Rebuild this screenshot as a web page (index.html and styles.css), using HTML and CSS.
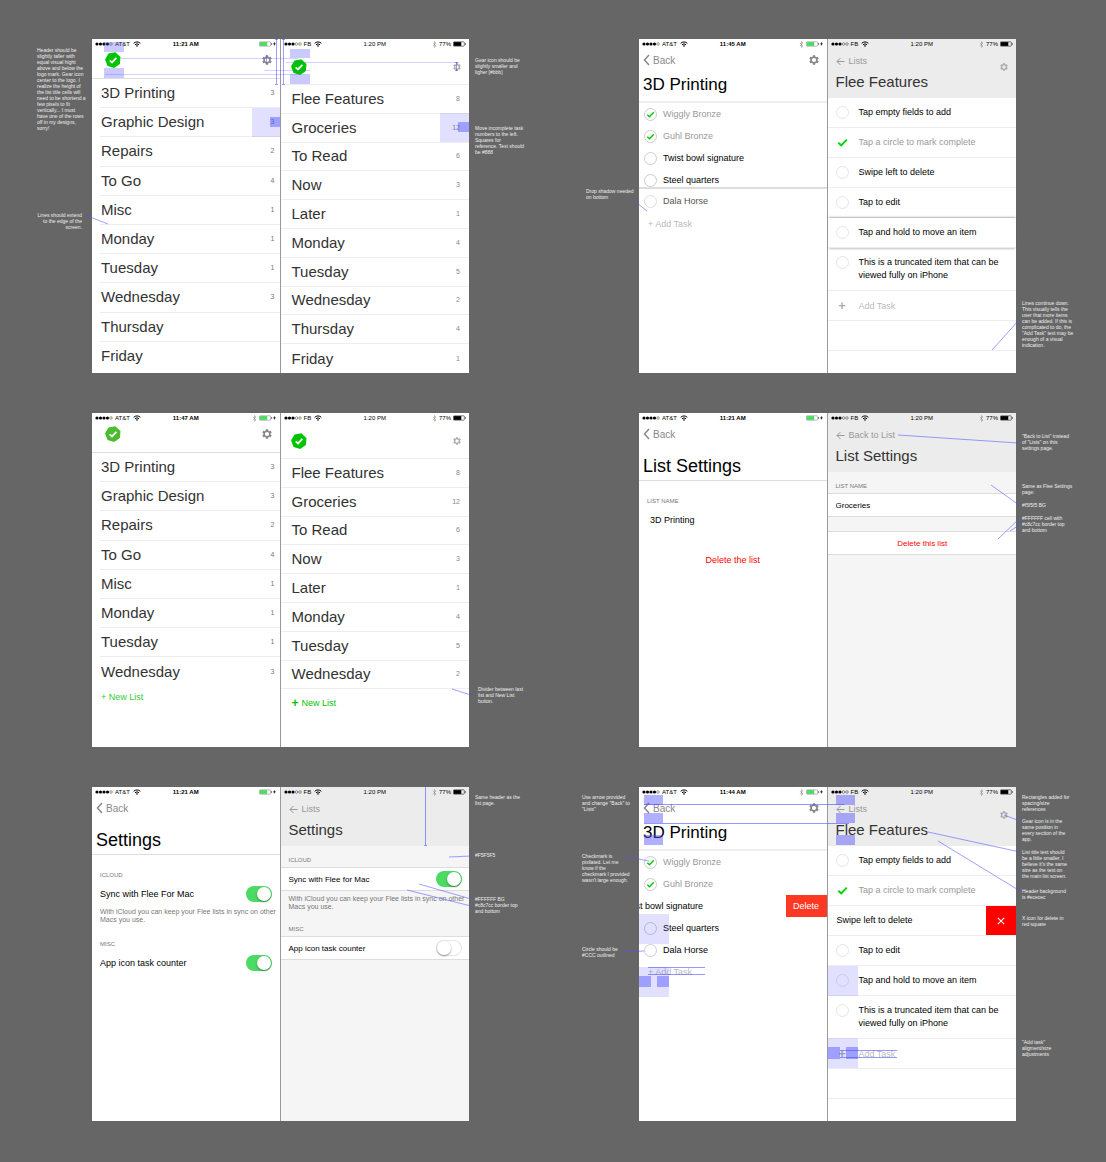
FILE: index.html
```html
<!DOCTYPE html>
<html lang="en">
<head>
    <meta charset="UTF-8">
    <meta name="viewport" content="width=device-width, initial-scale=1">
    <title>Flee design review</title>
    <link rel="stylesheet" href="styles.css">
</head>
<body>

<svg class="symbols" aria-hidden="true">
    <symbol id="logo" viewBox="0 0 16 16">
        <polygon fill="currentColor" points="10.3,.3 15.5,5 14.9,12 9.2,15.9 2.6,13.9 0,7.4 3.5,1.4"/>
        <path d="M4.7 8.3L7 10.4l4.4-4.5" fill="none" stroke="#fff" stroke-width="1.8"/>
    </symbol>
    <symbol id="gear" viewBox="2 2 20 20">
        <path fill="currentColor" fill-rule="evenodd" d="M19.14 12.94c.04-.3.06-.61.06-.94 0-.32-.02-.64-.07-.94l2.03-1.58c.18-.14.23-.41.12-.61l-1.92-3.32c-.12-.22-.37-.29-.59-.22l-2.39.96c-.5-.38-1.03-.7-1.62-.94l-.36-2.54c-.04-.24-.24-.41-.48-.41h-3.84c-.24 0-.43.17-.47.41l-.36 2.54c-.59.24-1.13.57-1.62.94l-2.39-.96c-.22-.08-.47 0-.59.22L2.74 8.87c-.12.21-.08.47.12.61l2.03 1.58c-.05.3-.09.63-.09.94s.02.64.07.94l-2.03 1.58c-.18.14-.23.41-.12.61l1.92 3.32c.12.22.37.29.59.22l2.39-.96c.5.38 1.03.7 1.62.94l.36 2.54c.05.24.24.41.48.41h3.84c.24 0 .44-.17.47-.41l.36-2.54c.59-.24 1.13-.56 1.62-.94l2.39.96c.22.08.47 0 .59-.22l1.92-3.32c.12-.22.07-.47-.12-.61l-2.01-1.58zM12 16.2a4.2 4.2 0 1 1 0-8.4 4.2 4.2 0 0 1 0 8.4z"/>
    </symbol>
    <symbol id="chevron" viewBox="0 0 7 12">
        <path d="M6 1L1.5 6 6 11" fill="none" stroke="currentColor" stroke-width="1.5"/>
    </symbol>
    <symbol id="arrow" viewBox="0 0 9 9">
        <path d="M8.5 4.5H1M4.5 1L1 4.5 4.5 8" fill="none" stroke="currentColor"/>
    </symbol>
    <symbol id="dots4" viewBox="0 0 18 4">
        <circle cx="2" cy="2" r="1.6"/><circle cx="5.5" cy="2" r="1.6"/><circle cx="9" cy="2" r="1.6"/><circle cx="12.5" cy="2" r="1.6"/>
        <circle cx="16" cy="2" r="1.3" fill="none" stroke="#000" stroke-width=".4"/>
    </symbol>
    <symbol id="dots3" viewBox="0 0 18 4">
        <circle cx="2" cy="2" r="1.6"/><circle cx="5.5" cy="2" r="1.6"/><circle cx="9" cy="2" r="1.6"/>
        <circle cx="12.5" cy="2" r="1.3" fill="none" stroke="#000" stroke-width=".4"/>
        <circle cx="16" cy="2" r="1.3" fill="none" stroke="#000" stroke-width=".4"/>
    </symbol>
    <symbol id="wifi" viewBox="0 0 12 9">
        <path d="M1 3.5a7 7 0 0 1 10 0M3 5.7a4.2 4.2 0 0 1 6 0" fill="none" stroke="#000" stroke-width="1.5"/>
        <path d="M4.4 7.2a2.2 2.2 0 0 1 3.2 0L6 8.9z"/>
    </symbol>
    <symbol id="bluetooth" viewBox="0 0 5 8">
        <path d="M.6 2.2l3.6 3.5L2.5 7.4V.6l1.7 1.7L.6 5.8" fill="none" stroke="#888" stroke-width=".6"/>
    </symbol>
    <symbol id="charging" viewBox="0 0 18 6">
        <rect x=".3" y=".8" width="11.4" height="4.4" rx=".8" fill="none" stroke="#777" stroke-width=".5"/>
        <rect x=".7" y="1.1" width="7.5" height="3.8" fill="#4cd964"/>
        <path d="M12.3 2.2v1.6l.8-.4v-.8z"/>
        <path d="M16 .8L14 3.3h1.3L14.9 5l2-2.5h-1.3z"/>
    </symbol>
    <symbol id="battery" viewBox="0 0 13 6">
        <rect x=".3" y=".8" width="11" height="4.4" rx=".8" fill="none" stroke="#000" stroke-width=".5"/>
        <rect x=".7" y="1.1" width="7.6" height="3.8"/>
        <path d="M11.9 2.2v1.6l.8-.4v-.8z"/>
    </symbol>
</svg>

<main>
    <!-- main list -->
    <section class="board">
        <div class="phone old">
            <div class="status">
                <span><svg class="dots"><use href="#dots4"/></svg>AT&amp;T<svg class="wifi"><use href="#wifi"/></svg></span>
                <b>11:21 AM</b>
                <span><svg class="charging"><use href="#charging"/></svg></span>
            </div>
            <header class="home">
                <svg class="logo"><use href="#logo"/></svg>
                <button class="gear" aria-label="Settings"><svg><use href="#gear"/></svg></button>
            </header>
            <ul class="lists">
                <li><a href="#">3D Printing</a><span>3</span></li>
                <li><a href="#">Graphic Design</a><span>3</span></li>
                <li><a href="#">Repairs</a><span>2</span></li>
                <li><a href="#">To Go</a><span>4</span></li>
                <li><a href="#">Misc</a><span>1</span></li>
                <li><a href="#">Monday</a><span>1</span></li>
                <li><a href="#">Tuesday</a><span>1</span></li>
                <li><a href="#">Wednesday</a><span>3</span></li>
                <li><a href="#">Thursday</a></li>
                <li><a href="#">Friday</a></li>
            </ul>
        </div>
        <div class="phone new">
            <div class="status">
                <span><svg class="dots"><use href="#dots3"/></svg>FB<svg class="wifi"><use href="#wifi"/></svg></span>
                <b>1:20 PM</b>
                <span><svg class="bluetooth"><use href="#bluetooth"/></svg>77%<svg class="battery"><use href="#battery"/></svg></span>
            </div>
            <header class="home">
                <svg class="logo"><use href="#logo"/></svg>
                <button class="gear" aria-label="Settings"><svg><use href="#gear"/></svg></button>
            </header>
            <ul class="lists">
                <li><a href="#">Flee Features</a><span>8</span></li>
                <li><a href="#">Groceries</a><span>12</span></li>
                <li><a href="#">To Read</a><span>6</span></li>
                <li><a href="#">Now</a><span>3</span></li>
                <li><a href="#">Later</a><span>1</span></li>
                <li><a href="#">Monday</a><span>4</span></li>
                <li><a href="#">Tuesday</a><span>5</span></li>
                <li><a href="#">Wednesday</a><span>2</span></li>
                <li><a href="#">Thursday</a><span>4</span></li>
                <li><a href="#">Friday</a><span>1</span></li>
            </ul>
        </div>
        <svg class="marks" aria-hidden="true">
            <g class="mid">
                <rect x="12" y="3" width="20" height="10"/><rect x="12" y="29" width="20" height="10"/>
                <rect x="198" y="10" width="20" height="9"/><rect x="198" y="35" width="20" height="10"/>
            </g>
            <g class="light"><rect x="160" y="69" width="28" height="29"/><rect x="348" y="74" width="29" height="29"/></g>
            <g class="dark"><rect x="178" y="78" width="10" height="10"/><rect x="366" y="83" width="11" height="10"/></g>
            <path class="thin" d="M29 19.5H206M194 23.5H367M172 31.5H218M13 35.5H206"/>
            <path d="M184.5 0V45M183 45.5h3M183 .5h3M191.5 0V45M190 45.5h3M190 .5h3M174.5 16v9M364.5 23v9M363 23.5h3M363 31.5h3"/>
            <path d="M-7 176L16 185"/>
        </svg>
        <p class="note header-height">Header should be<br>slightly taller with<br>equal visual hight<br>above and below the<br>logo mark. Gear icon<br>center to the logo. I<br>realize the height of<br>the list title cells will<br>need to be shortend a<br>few pixels to fit<br>vertically... I must<br>have one of the rows<br>off in my designs,<br>sorry!</p>
        <p class="note line-extend">Lines should extend<br>to the edge of the<br>screen.</p>
        <p class="note gear-size">Gear icon should be<br>slightly smaller and<br>ligher [#bbb]</p>
        <p class="note move-count">Move incomplete task<br>numbers to the left.<br>Squares for<br>reference. Text should<br>be #888</p>
    </section>

    <!-- tasks, item being dragged -->
    <section class="board">
        <div class="phone old">
            <div class="status">
                <span><svg class="dots"><use href="#dots4"/></svg>AT&amp;T<svg class="wifi"><use href="#wifi"/></svg></span>
                <b>11:45 AM</b>
                <span><svg class="bluetooth"><use href="#bluetooth"/></svg><svg class="charging"><use href="#charging"/></svg></span>
            </div>
            <header class="nav thick">
                <a class="back" href="#"><svg><use href="#chevron"/></svg>Back</a>
                <button class="gear" aria-label="Settings"><svg><use href="#gear"/></svg></button>
                <h2>3D Printing</h2>
            </header>
            <ul class="tasks">
                <li><label><input type="checkbox" checked><span>Wiggly Bronze</span></label></li>
                <li><label><input type="checkbox" checked><span>Guhl Bronze</span></label></li>
                <li><label><input type="checkbox"><span>Twist bowl signature</span></label></li>
                <li><label><input type="checkbox"><span>Steel quarters</span></label></li>
                <li class="lifted"><label><input type="checkbox"><span>Dala Horse</span></label></li>
                <li><button class="add">+ Add Task</button></li>
            </ul>
        </div>
        <div class="phone new">
            <div class="status shaded">
                <span><svg class="dots"><use href="#dots3"/></svg>FB<svg class="wifi"><use href="#wifi"/></svg></span>
                <b>1:20 PM</b>
                <span><svg class="bluetooth"><use href="#bluetooth"/></svg>77%<svg class="battery"><use href="#battery"/></svg></span>
            </div>
            <header class="nav">
                <a class="back" href="#"><svg><use href="#arrow"/></svg>Lists</a>
                <button class="gear" aria-label="Settings"><svg><use href="#gear"/></svg></button>
                <h2>Flee Features</h2>
            </header>
            <ul class="tasks">
                <li><label><input type="checkbox"><span>Tap empty fields to add</span></label></li>
                <li><label><input type="checkbox" checked><span>Tap a circle to mark complete</span></label></li>
                <li><label><input type="checkbox"><span>Swipe left to delete</span></label></li>
                <li><label><input type="checkbox"><span>Tap to edit</span></label></li>
                <li class="lifted"><label><input type="checkbox"><span>Tap and hold to move an item</span></label></li>
                <li><label><input type="checkbox"><span>This is a truncated item that can be<br>viewed fully on iPhone</span></label></li>
                <li><button class="add"><b>+</b>Add Task</button></li>
                <li></li>
            </ul>
        </div>
        <svg class="marks" aria-hidden="true">
            <path d="M-7 160L8 172M380 281L353 311"/>
        </svg>
        <p class="note drop-shadow">Drop shadow needed<br>on bottom</p>
        <p class="note lines-down">Lines continue down.<br>This visually tells the<br>user that more items<br>can be added. If this is<br>complicated to do, the<br>"Add Task" text may be<br>enough of a visual<br>indication.</p>
    </section>

    <!-- main list with the New List button -->
    <section class="board">
        <div class="phone old">
            <div class="status">
                <span><svg class="dots"><use href="#dots4"/></svg>AT&amp;T<svg class="wifi"><use href="#wifi"/></svg></span>
                <b>11:47 AM</b>
                <span><svg class="bluetooth"><use href="#bluetooth"/></svg><svg class="charging"><use href="#charging"/></svg></span>
            </div>
            <header class="home">
                <svg class="logo faded"><use href="#logo"/></svg>
                <button class="gear" aria-label="Settings"><svg><use href="#gear"/></svg></button>
            </header>
            <ul class="lists">
                <li><a href="#">3D Printing</a><span>3</span></li>
                <li><a href="#">Graphic Design</a><span>3</span></li>
                <li><a href="#">Repairs</a><span>2</span></li>
                <li><a href="#">To Go</a><span>4</span></li>
                <li><a href="#">Misc</a><span>1</span></li>
                <li><a href="#">Monday</a><span>1</span></li>
                <li><a href="#">Tuesday</a><span>1</span></li>
                <li class="last"><a href="#">Wednesday</a><span>3</span></li>
                <li class="last"><button class="new-list">+ New List</button></li>
            </ul>
        </div>
        <div class="phone new">
            <div class="status">
                <span><svg class="dots"><use href="#dots3"/></svg>FB<svg class="wifi"><use href="#wifi"/></svg></span>
                <b>1:20 PM</b>
                <span><svg class="bluetooth"><use href="#bluetooth"/></svg>77%<svg class="battery"><use href="#battery"/></svg></span>
            </div>
            <header class="home">
                <svg class="logo"><use href="#logo"/></svg>
                <button class="gear" aria-label="Settings"><svg><use href="#gear"/></svg></button>
            </header>
            <ul class="lists">
                <li><a href="#">Flee Features</a><span>8</span></li>
                <li><a href="#">Groceries</a><span>12</span></li>
                <li><a href="#">To Read</a><span>6</span></li>
                <li><a href="#">Now</a><span>3</span></li>
                <li><a href="#">Later</a><span>1</span></li>
                <li><a href="#">Monday</a><span>4</span></li>
                <li><a href="#">Tuesday</a><span>5</span></li>
                <li><a href="#">Wednesday</a><span>2</span></li>
                <li class="last"><button class="new-list"><b>+</b>New List</button></li>
            </ul>
        </div>
        <svg class="marks" aria-hidden="true">
            <path d="M360 276L382 283"/>
        </svg>
        <p class="note divider">Divider between last<br>list and New List<br>button.</p>
    </section>

    <!-- list settings -->
    <section class="board">
        <div class="phone old">
            <div class="status">
                <span><svg class="dots"><use href="#dots4"/></svg>AT&amp;T<svg class="wifi"><use href="#wifi"/></svg></span>
                <b>11:21 AM</b>
                <span><svg class="charging"><use href="#charging"/></svg></span>
            </div>
            <header class="nav tall">
                <a class="back" href="#"><svg><use href="#chevron"/></svg>Back</a>
                <h2>List Settings</h2>
            </header>
            <div class="settings">
                <label class="caption" for="name-old">LIST NAME</label>
                <div class="cell"><input class="name" id="name-old" type="text" value="3D Printing"></div>
                <div class="cell delete-cell"><button>Delete the list</button></div>
            </div>
        </div>
        <div class="phone new grouped">
            <div class="status shaded">
                <span><svg class="dots"><use href="#dots3"/></svg>FB<svg class="wifi"><use href="#wifi"/></svg></span>
                <b>1:20 PM</b>
                <span><svg class="bluetooth"><use href="#bluetooth"/></svg>77%<svg class="battery"><use href="#battery"/></svg></span>
            </div>
            <header class="nav">
                <a class="back" href="#"><svg><use href="#arrow"/></svg>Back to List</a>
                <h2>List Settings</h2>
            </header>
            <div class="settings">
                <label class="caption" for="name-new">LIST NAME</label>
                <div class="cell"><input class="name" id="name-new" type="text" value="Groceries"></div>
                <div class="cell delete-cell"><button>Delete this list</button></div>
            </div>
        </div>
        <svg class="marks" aria-hidden="true">
            <path d="M259 22L379 30M352 72L380 92M359 126L381 105M371 118L382 111"/>
        </svg>
        <p class="note back-to-list">"Back to List" instead<br>of "Lists" on this<br>settings page.</p>
        <p class="note same-page">Same as Flee Settings<br>page:</p>
        <p class="note page-bg">#f5f5f5 BG</p>
        <p class="note cell-border">#FFFFFF cell with<br>#c8c7cc border top<br>and bottom</p>
    </section>

    <!-- app settings -->
    <section class="board">
        <div class="phone old">
            <div class="status">
                <span><svg class="dots"><use href="#dots4"/></svg>AT&amp;T<svg class="wifi"><use href="#wifi"/></svg></span>
                <b>11:21 AM</b>
                <span><svg class="charging"><use href="#charging"/></svg></span>
            </div>
            <header class="nav tall">
                <a class="back" href="#"><svg><use href="#chevron"/></svg>Back</a>
                <h2>Settings</h2>
            </header>
            <div class="settings">
                <h3 class="caption">ICLOUD</h3>
                <label class="cell">Sync with Flee For Mac<input class="switch" type="checkbox" checked></label>
                <p>With iCloud you can keep your Flee lists in sync on other<br>Macs you use.</p>
                <h3 class="caption">MISC</h3>
                <label class="cell">App icon task counter<input class="switch" type="checkbox" checked></label>
            </div>
        </div>
        <div class="phone new grouped">
            <div class="status shaded">
                <span><svg class="dots"><use href="#dots3"/></svg>FB<svg class="wifi"><use href="#wifi"/></svg></span>
                <b>1:20 PM</b>
                <span><svg class="bluetooth"><use href="#bluetooth"/></svg>77%<svg class="battery"><use href="#battery"/></svg></span>
            </div>
            <header class="nav">
                <a class="back" href="#"><svg><use href="#arrow"/></svg>Lists</a>
                <h2>Settings</h2>
            </header>
            <div class="settings">
                <h3 class="caption">ICLOUD</h3>
                <label class="cell">Sync with Flee for Mac<input class="switch" type="checkbox" checked></label>
                <p>With iCloud you can keep your Flee lists in sync on other<br>Macs you use.</p>
                <h3 class="caption">MISC</h3>
                <label class="cell">App icon task counter<input class="switch" type="checkbox"></label>
            </div>
        </div>
        <svg class="marks" aria-hidden="true">
            <path class="strong" d="M333.5 0V58M332 58.5h3"/>
            <path d="M357 70L379 69M327 97L379 112M315 103L379 119"/>
        </svg>
        <p class="note same-header">Same header as the<br>list page.</p>
        <p class="note settings-bg">#F5F5F5</p>
        <p class="note settings-border">#FFFFFF BG<br>#c8c7cc border top<br>and bottom</p>
    </section>

    <!-- tasks, item being deleted -->
    <section class="board">
        <div class="phone old">
            <div class="status">
                <span><svg class="dots"><use href="#dots4"/></svg>AT&amp;T<svg class="wifi"><use href="#wifi"/></svg></span>
                <b>11:44 AM</b>
                <span><svg class="bluetooth"><use href="#bluetooth"/></svg><svg class="charging"><use href="#charging"/></svg></span>
            </div>
            <header class="nav thick">
                <a class="back" href="#"><svg><use href="#chevron"/></svg>Back</a>
                <button class="gear" aria-label="Settings"><svg><use href="#gear"/></svg></button>
                <h2>3D Printing</h2>
            </header>
            <ul class="tasks">
                <li><label><input type="checkbox" checked><span>Wiggly Bronze</span></label></li>
                <li><label><input type="checkbox" checked><span>Guhl Bronze</span></label></li>
                <li class="swiped"><label><input type="checkbox"><span>Twist bowl signature</span></label><button class="delete">Delete</button></li>
                <li><label><input type="checkbox"><span>Steel quarters</span></label></li>
                <li><label><input type="checkbox"><span>Dala Horse</span></label></li>
                <li><button class="add">+ Add Task</button></li>
            </ul>
        </div>
        <div class="phone new">
            <div class="status shaded">
                <span><svg class="dots"><use href="#dots3"/></svg>FB<svg class="wifi"><use href="#wifi"/></svg></span>
                <b>1:20 PM</b>
                <span><svg class="bluetooth"><use href="#bluetooth"/></svg>77%<svg class="battery"><use href="#battery"/></svg></span>
            </div>
            <header class="nav">
                <a class="back" href="#"><svg><use href="#arrow"/></svg>Lists</a>
                <button class="gear" aria-label="Settings"><svg><use href="#gear"/></svg></button>
                <h2>Flee Features</h2>
            </header>
            <ul class="tasks">
                <li><label><input type="checkbox"><span>Tap empty fields to add</span></label></li>
                <li><label><input type="checkbox" checked><span>Tap a circle to mark complete</span></label></li>
                <li class="swiped"><label><input type="checkbox"><span>Swipe left to delete</span></label><button class="delete" aria-label="Delete"><svg viewBox="0 0 8 8"><path d="M.8.8l6.4 6.4M7.2.8L.8 7.2" stroke="#fff" stroke-width="1.1"/></svg></button></li>
                <li><label><input type="checkbox"><span>Tap to edit</span></label></li>
                <li><label><input type="checkbox"><span>Tap and hold to move an item</span></label></li>
                <li><label><input type="checkbox"><span>This is a truncated item that can be<br>viewed fully on iPhone</span></label></li>
                <li><button class="add"><b>+</b>Add Task</button></li>
                <li></li>
            </ul>
        </div>
        <svg class="marks" aria-hidden="true">
            <g class="dark">
                <rect x="5" y="8" width="19" height="10"/><rect x="5" y="26" width="19" height="10"/><rect x="5" y="48" width="19" height="10"/>
                <rect x="197" y="8" width="19" height="10"/><rect x="197" y="26" width="19" height="10"/><rect x="197" y="48" width="19" height="10"/>
                <rect x="0" y="189" width="12" height="11"/><rect x="18" y="189" width="12" height="11"/>
                <rect x="189" y="260" width="12" height="12"/><rect x="207" y="260" width="12" height="12"/>
            </g>
            <g class="light">
                <rect x="0" y="127" width="30" height="30"/><rect x="0" y="180" width="30" height="30"/>
                <rect x="189" y="179" width="30" height="30"/><rect x="189" y="251" width="30" height="30"/>
            </g>
            <path class="strong" d="M5 17.5H205M5 36.5H210M9 180.5H66M9 187.5H66M201 263.5H258M201 270.5H258"/>
            <path d="M-16 69L10 74M-17 165L5 164M365 28L381 34M289 45L381 65M299 54L381 104"/>
        </svg>
        <p class="note use-arrow">Use arrow provided<br>and change "Back" to<br>"Lists"</p>
        <p class="note checkmark">Checkmark is<br>pixilated. Let me<br>know if the<br>checkmark I provided<br>wasn't large enough.</p>
        <p class="note circle">Circle should be<br>#CCC outlined</p>
        <p class="note rectangles">Rectangles added for<br>spacing/size<br>references</p>
        <p class="note gear-place">Gear icon is in the<br>same position in<br>every section of the<br>app.</p>
        <p class="note title-size">List title text should<br>be a little smaller. I<br>believe it's the same<br>size as the text on<br>the main list screen.</p>
        <p class="note header-bg">Header background<br>is #ececec</p>
        <p class="note x-icon">X icon for delete in<br>red square</p>
        <p class="note add-task">"Add task"<br>aligment/size<br>adjustments</p>
    </section>
</main>

</body>
</html>
```
FILE: styles.css
```css
* {
    box-sizing: border-box;
}
body {
    margin: 0;
    background-color: #666;
    font-family: "Liberation Sans", Arial, sans-serif;
    color: #333;
}
h2, h3, p, ul {
    margin: 0;
    padding: 0;
    font-weight: normal;
}
ul {
    list-style: none;
}
a {
    color: inherit;
    text-decoration: none;
}
button {
    font-family: inherit;
    border: 0;
    padding: 0;
    background: none;
}
svg {
    display: block;
}
.symbols {
    display: none;
}
main {
    display: grid;
    grid-template-columns: 1fr 1fr;
    gap: 40px 170px;
    padding: 39px 90px 41px 92px;
}
.board {
    position: relative;
    display: grid;
    grid-template-columns: 1fr 1fr;
    min-height: 334px;
}
.phone {
    display: flex;
    flex-direction: column;
    min-width: 0;
    background-color: white;
}
.old {
    border-right: 1px solid #999;
}
.grouped {
    background-color: #f5f5f5;
}

/* status bar */
.status {
    display: grid;
    grid-template-columns: 1fr auto 1fr;
    align-items: center;
    height: 10px;
    padding: 0 3px;
    font-size: 6px;
    line-height: 10px;
    color: black;
}
.status span {
    display: flex;
    align-items: center;
    gap: 2px;
}
.status span:last-child {
    justify-content: flex-end;
}
.new .status b {
    font-weight: normal;
}
.dots {
    width: 18px;
    height: 4px;
}
.wifi {
    width: 8px;
    height: 6px;
    margin-left: 1px;
}
.bluetooth {
    width: 5px;
    height: 7px;
}
.charging {
    width: 18px;
    height: 6px;
}
.battery {
    width: 13px;
    height: 6px;
}
.shaded {
    background-color: #ececec;
}

/* headers */
.home {
    display: flex;
    justify-content: space-between;
    align-items: center;
    height: 30px;
    padding: 0 8px 7px 13px;
    border-bottom: 1px solid #ddd;
}
.new .home {
    height: 36px;
    padding: 0 8px 0 10px;
    border-bottom-color: #eee;
}
.logo {
    width: 16px;
    height: 16px;
    color: #00c400;
}
.faded {
    color: #4cbb2f;
}
.gear svg {
    width: 10px;
    height: 10px;
    color: #888;
}
.new .gear svg {
    width: 8px;
    height: 8px;
    color: #aaa;
}
.nav {
    display: grid;
    grid-template-columns: 1fr auto;
    align-items: center;
    padding: 0 8px 6px 4px;
    border-bottom: 1px solid #ddd;
}
.back {
    display: flex;
    align-items: center;
    gap: 3px;
    height: 22px;
    font-size: 10px;
    color: #888;
}
.back svg {
    width: 7px;
    height: 12px;
}
.nav h2 {
    grid-column: 1 / 3;
    margin-top: 4px;
    font-size: 17px;
    line-height: 20px;
    color: black;
}
.thick {
    border-bottom: 2px solid #eee;
}
.tall {
    padding-bottom: 4px;
}
.tall h2 {
    margin-top: 11px;
    font-size: 18px;
}
.new .nav {
    padding: 0 8px 7px 8px;
    background-color: #ececec;
    border: 0;
}
.new .back {
    height: 24px;
    font-size: 9px;
    gap: 4px;
    color: #999;
}
.new .back svg {
    width: 9px;
    height: 9px;
}
.new .nav .gear {
    align-self: end;
    margin-bottom: 2px;
}
.new .nav h2 {
    margin-top: 0;
    font-size: 15px;
    line-height: 18px;
    color: #333;
}

/* list of lists */
.lists {
    flex: 1;
    display: grid;
    grid-template-rows: repeat(10, 1fr);
    padding: 0 0 2px 8px;
}
.lists li {
    display: flex;
    justify-content: space-between;
    align-items: center;
    padding: 0 5px 0 1px;
    border-bottom: 1px solid #eee;
    font-size: 15px;
    line-height: 18px;
}
.lists span {
    font-size: 7px;
    color: #777;
}
.new .lists {
    padding: 0;
}
.new .lists li {
    padding: 0 9px 0 11px;
}
.new .lists span {
    color: #888;
}
.lists li:last-child, .old .lists .last {
    border-bottom: 0;
}
.new-list {
    display: flex;
    align-items: center;
    margin-bottom: 8px;
    font-size: 9px;
    line-height: 12px;
    color: #3c3;
}
.new .new-list {
    margin-bottom: 2px;
    color: #00c400;
}
.new-list b {
    margin-right: 3px;
    font-size: 12px;
}

/* tasks */
.tasks {
    font-size: 9px;
    line-height: 13px;
    color: black;
}
.tasks li {
    display: flex;
    height: 22px;
    background-color: white;
}
.tasks label {
    flex: 1;
    display: flex;
    align-items: center;
    gap: 6px;
    padding-left: 5px;
    white-space: nowrap;
}
.tasks input {
    appearance: none;
    flex: none;
    width: 13px;
    height: 13px;
    margin: 0;
    border: 1px solid #ccc;
    border-radius: 50%;
}
.tasks input:checked {
    background: url("data:image/svg+xml,%3Csvg xmlns='http://www.w3.org/2000/svg' viewBox='0 0 11 11'%3E%3Cpath d='M2.3 5.8l2.2 2L8.8 3.2' fill='none' stroke='%2300cc00' stroke-width='1.4'/%3E%3C/svg%3E") center / 11px no-repeat;
}
.tasks input:checked + span {
    color: #999;
}
.old .lifted {
    position: relative;
    height: 26px;
    margin-top: -4px;
    border-top: 2px solid #ddd;
    color: #555;
}
.old .lifted input {
    border-color: #ddd;
}
.add {
    padding-left: 9px;
    font-size: 9px;
    color: #bbb;
}
.new .tasks li {
    height: auto;
    min-height: 30px;
    border-bottom: 1px solid #eee;
}
.new .tasks label {
    align-items: flex-start;
    gap: 10px;
    padding: 8px 0 8px 8px;
}
.new .tasks input {
    border-color: #e5e5e5;
}
.new .tasks input:checked {
    border: 0;
    background-image: url("data:image/svg+xml,%3Csvg xmlns='http://www.w3.org/2000/svg' viewBox='0 0 11 11'%3E%3Cpath d='M1.4 5.8L4.2 8.4L9.8 2.6' fill='none' stroke='%2300d400' stroke-width='1.9'/%3E%3C/svg%3E");
}
.new .lifted {
    position: relative;
    box-shadow: 0 2px 2px -1px rgba(0, 0, 0, 0.25), 0 -2px 2px -1px rgba(0, 0, 0, 0.25);
}
.new .add {
    display: flex;
    align-items: center;
    padding: 0;
}
.add b {
    width: 31px;
    padding-right: 2px;
    font-size: 12px;
    text-align: center;
    color: #aaa;
}
.tasks .swiped {
    overflow: hidden;
}
.delete {
    width: 41px;
    background-color: #ff3824;
    color: white;
    font-size: 9px;
}
.old .swiped label {
    margin-left: -41px;
}
.new .swiped label {
    margin-left: -22px;
}
.new .delete {
    display: grid;
    place-items: center;
    width: 30px;
    background-color: red;
}
.delete svg {
    width: 8px;
    height: 8px;
}

/* settings */
.settings {
    display: flex;
    flex-direction: column;
    font-size: 9px;
    color: black;
}
.caption {
    padding: 16px 8px 4px;
    font-size: 6px;
    line-height: 8px;
    color: #777;
}
.cell {
    display: flex;
    justify-content: space-between;
    align-items: center;
    height: 22px;
    padding: 0 8px;
}
.name {
    width: 100%;
    padding: 0 0 0 3px;
    border: 0;
    background: none;
    font-family: inherit;
    font-size: 9px;
    color: black;
}
.cell button {
    flex: 1;
    font-size: 9px;
    color: red;
}
.delete-cell {
    margin-top: 18px;
}
.settings p {
    padding: 3px 0 0 8px;
    font-size: 7px;
    line-height: 8px;
    white-space: nowrap;
    color: #777;
}
.switch {
    appearance: none;
    width: 26px;
    height: 16px;
    margin: 0;
    padding: 1px;
    border-radius: 8px;
    background-color: #4cd964;
}
.switch::before {
    content: "";
    display: block;
    width: 14px;
    height: 14px;
    margin-left: auto;
    border-radius: 50%;
    background-color: white;
    box-shadow: 0 1px 2px rgba(0, 0, 0, 0.4);
}
.new .switch:not(:checked) {
    background-color: white;
    box-shadow: inset 0 0 0 1px #e5e5e5;
}
.new .switch:not(:checked)::before {
    margin-left: 0;
}
.new .caption {
    padding: 10px 7px 3px 8px;
}
.new .cell {
    height: 24px;
    padding: 0 7px 0 8px;
    border-top: 1px solid #ddd;
    border-bottom: 1px solid #ddd;
    background-color: white;
    font-size: 8px;
}
.new .name {
    padding: 0;
    font-size: 8px;
}
.new .cell button {
    font-size: 8px;
}
.new .delete-cell {
    margin-top: 14px;
}
.new .settings p {
    padding: 4px 0 4px 8px;
}

/* review marks and notes lie over the boards */
.marks {
    position: absolute;
    top: 0;
    left: 0;
    width: 100%;
    height: 100%;
    overflow: visible;
    pointer-events: none;
}
.marks path {
    fill: none;
    stroke: rgba(80, 80, 255, 0.55);
}
.marks .thin {
    stroke: rgba(80, 80, 255, 0.25);
}
.marks .strong {
    stroke: rgba(80, 80, 255, 0.6);
}
.light {
    fill: rgba(80, 80, 255, 0.17);
}
.mid {
    fill: rgba(80, 80, 255, 0.3);
}
.dark {
    fill: rgba(80, 80, 255, 0.45);
}
.note {
    position: absolute;
    left: 383px;
    font-size: 5px;
    line-height: 6px;
    white-space: nowrap;
    color: #eee;
}
.header-height {
    left: -55px;
    top: 8px;
}
.line-extend {
    left: auto;
    right: 387px;
    top: 173px;
    text-align: right;
}
.gear-size {
    top: 18px;
}
.move-count {
    top: 86px;
}
.drop-shadow {
    left: -53px;
    top: 149px;
}
.lines-down {
    top: 261px;
}
.divider {
    left: 386px;
    top: 273px;
}
.back-to-list {
    top: 20px;
}
.same-page {
    top: 70px;
}
.page-bg {
    top: 89px;
}
.cell-border {
    top: 102px;
}
.same-header {
    top: 7px;
}
.settings-bg {
    top: 65px;
}
.settings-border {
    top: 109px;
}
.use-arrow {
    left: -57px;
    top: 7px;
}
.checkmark {
    left: -57px;
    top: 66px;
}
.circle {
    left: -57px;
    top: 159px;
}
.rectangles {
    top: 7px;
}
.gear-place {
    top: 31px;
}
.title-size {
    top: 62px;
}
.header-bg {
    top: 101px;
}
.x-icon {
    top: 128px;
}
.add-task {
    top: 252px;
}
```
